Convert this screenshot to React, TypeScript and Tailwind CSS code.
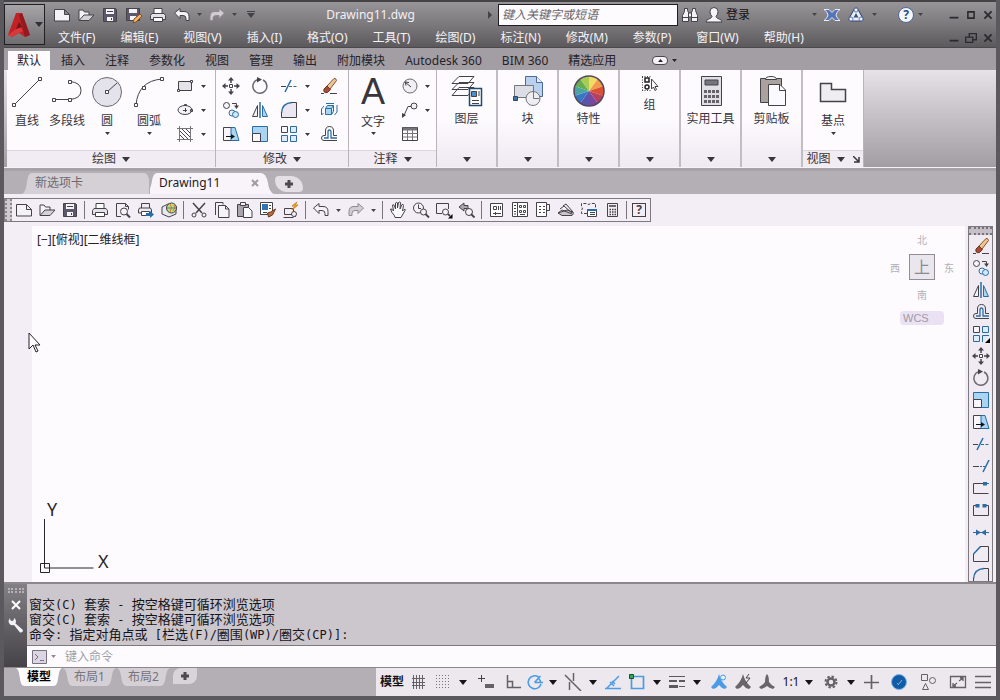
import type { ReactNode } from "react";

const INK = "#454248";
const BLUE = "#2c6ca6";
const SKY = "#a9d5f2";

const glyphs: Record<string, ReactNode> = {
  new: (
    <path d="M1.500 3.500h10l5 5v6.500h-15zM11.500 3.500v5h5" fill="#f4f2f6" />
  ),
  open: (
    <>
      <path d="M2 14V4h4l1.500 2H12v3" fill="#f4f2f6" />
      <path d="M2 14.500 7 9h10l-5 5.500z" fill="#d6d2da" />
    </>
  ),
  save: (
    <>
      <path d="M2.500 2.500h12l1 1v12h-13z" fill="#5b586a" />
      <path d="M5 3h8v5H5zM6 11h6v4H6z" fill="#f6f4f8" stroke="none" />
      <path d="M6 5.500h6M10.500 12v2" />
    </>
  ),
  saveAs: (
    <>
      <path d="M1.500 2.500h13v12h-13z" fill="#5b586a" />
      <path d="M4 3h8v4H4zM5 10h6v4H5z" fill="#f6f4f8" stroke="none" />
      <path d="m8 17 1-4 6-5 2 2-6 6z" fill="#f2b566" stroke="#8a4a22" />
    </>
  ),
  print: (
    <>
      <path d="M5 8V2.500h8V8" fill="#fff" />
      <path d="M3 7.500h12l1.500 2v4h-15v-4z" fill="#e4e1e8" />
      <path d="M4.500 11.500h9v4h-9z" fill="#fff" />
    </>
  ),
  undo: <path d="M1.500 7 7 2.500v3h4q5 0 5 5v4h-3v-2q0-3-3-3H7v3z" fill="#f4f2f6" />,
  redo: <path d="M16.500 7 11 2.500v3H7q-5 0-5 5v4h3v-2q0-3 3-3h3v3z" fill="#d0ccd2" stroke="#8d898f" />,
  binoculars: (
    <>
      <path d="M3.500 2.500h3v2l1 2v9h-6v-6l2-4zM11.500 2.500h3v2l2 5v6h-6v-9l1-2z" fill="#f4f2f6" />
      <path d="M7.500 7h3v4h-3zM1.500 11.500h6M10.500 11.500h6" fill="#f4f2f6" />
    </>
  ),
  user: (
    <path d="M9 1.500q4 0 4 4 0 3-2 5 0 1 2 2 4 1 4 3.500H1q0-2.500 4-3.500 2-1 2-2-2-2-2-5 0-4 4-4z" fill="#f6f4f8" />
  ),
  exchange: (
    <path d="M1 3.500h5l3 3 3-3h5q-4 3-4 5.500t4 5.500h-5l-3-3-3 3H1q4-3 4-5.500t-4-5.500z" fill="#5575b8" stroke="#e6ebf8" />
  ),
  a360: (
    <>
      <path d="M9 4 4 13h10z" stroke="#31456e" strokeWidth="5" strokeLinejoin="round" />
      <path d="M9 4 4 13h10z" stroke="#e8edf8" strokeWidth="3" strokeLinejoin="round" />
      <circle cx="9" cy="4" r="2" fill="#f1f4fb" stroke="#5b78ac" />
      <circle cx="4" cy="13" r="2" fill="#f1f4fb" stroke="#5b78ac" />
      <circle cx="14" cy="13" r="2" fill="#f1f4fb" stroke="#5b78ac" />
    </>
  ),
  preview: (
    <>
      <path d="M2.500 15.500v-13h9l3 3v3M11.500 2.500v3h3M2.500 15.500H7" />
      <circle cx="10" cy="10.500" r="3.500" fill="#f4f2f6" />
      <path d="m12.500 13 3.500 3.500" strokeWidth="2" />
    </>
  ),
  publish: (
    <>
      <path d="M4.500 7V2.500h8V7M2.500 7h11l1 2v3h-13V9z" fill="#eeebf1" />
      <path d="M4.500 10.500h8v4h-8z" fill="#fff" />
      <path d="M9 12h4v-2l4 3.500-4 3.500v-2H9z" fill={BLUE} stroke="none" />
    </>
  ),
  globe: (
    <>
      <path d="m2 6 6-3 8 2v8l-7 3-7-3z" fill="#e6e9ef" />
      <circle cx="11.500" cy="7" r="5" fill="#c8dc6c" />
      <path d="M10 3q3 3 0 8M14 4q2 3-1 6" stroke="#cf7a35" />
      <path d="M7 7h9" stroke="#3f81bd" />
    </>
  ),
  cut: (
    <>
      <path d="m3 2 9 10M15 2 6 12" strokeWidth="1.500" />
      <circle cx="4" cy="14" r="2" />
      <circle cx="14" cy="14" r="2" />
    </>
  ),
  copyDoc: (
    <>
      <path d="M2.500 14V1.500H10v2" />
      <path d="M5.500 4.500h7l3.500 3.500v8.500H5.500zM12.500 4.500V8H16" fill="#f6f4f8" />
    </>
  ),
  paste: (
    <>
      <path d="M1.500 3.500h11v12h-11z" fill="#a8a4ab" />
      <path d="M4.500 1.500h5v3h-5z" fill="#f3f1f5" />
      <path d="M7.500 6.500h5l3.500 3.500v6.500H7.500z" fill="#fbfafc" />
    </>
  ),
  matchProps: (
    <>
      <path d="M1.500 1.500h12v12h-12z" fill="#fff" />
      <path d="M3 3h6v6H3z" fill="#2f74b5" stroke="none" />
      <path d="M10 4.500h2M10 7.500h2M4 11.500h4" />
      <path d="m16.500 8-5 3-3 1 1 4 4-2z" fill="#b86b38" stroke="#6d3a20" />
    </>
  ),
  blockEdit: (
    <>
      <path d="M2.500 7.500h9v6h-9zM1.500 16.500h10M11 13l3 3" />
      <circle cx="12" cy="13" r="2.500" fill="#f4f2f6" />
      <path d="m15 1-5 4h3l-3 4 6-5h-3z" fill="#f6b23c" stroke="#d38420" />
    </>
  ),
  hand: (
    <path d="M6 16.500q0-2-3-5L1.500 8q1.500-.5 3 2L3.500 4q1.500-1 2 1l1 3V2q1.500-1.500 2 0v5l1-5.500q1.500-1 2 0L11 8l2-4.500q1.500-.5 1.500 1L13.500 10l1.500-1.500q2-.5 1 1l-4 7z" fill="#fbfafc" />
  ),
  zoomTime: (
    <>
      <circle cx="6.500" cy="7" r="5" fill="#f4f2f6" />
      <path d="M6.500 3.500v4H9" />
      <circle cx="11.500" cy="11" r="3" fill="#f4f2f6" />
      <path d="m13.500 13 3.500 3.500" strokeWidth="1.800" />
    </>
  ),
  zoomWindow: (
    <>
      <path d="M1.500 12.500v-10h12V8M1.500 12.500H7" />
      <circle cx="10.500" cy="11" r="3" fill="#f4f2f6" />
      <path d="m13 13 2 2" strokeWidth="1.800" />
      <path d="M17.500 13v4.500H13z" fill="#000" stroke="none" />
    </>
  ),
  zoomPrev: (
    <>
      <path d="m1 6 5-4v2.500h4v3H6V10z" fill="#aaa6ad" />
      <circle cx="11" cy="11" r="3.500" fill="#f4f2f6" />
      <path d="m13 13 3.500 3.500" strokeWidth="1.800" />
    </>
  ),
  palette: (
    <>
      <path d="M2.500 2.500h12v13h-12z" fill="#fff" />
      <path d="M5.500 5.500h3v3h-3zM10.500 5v4M12.500 5v4M5 12.500h8M7.500 11v3" />
    </>
  ),
  design: (
    <>
      <path d="M1.500 1.500h15v14h-15zM6.500 2v13" fill="#fff" />
      <path d="M3 4.500h2M3 7.500h2M3 10.500h2M3 13h2M8.500 4.500h2v2h-2zM12.500 4.500h2v2h-2zM8.500 9.500h2v2h-2zM12.500 9.500h2v2h-2zM9 13.500h5" />
    </>
  ),
  toolPalettes: (
    <>
      <path d="M2.500 1.500h10v14h-10z" fill="#fff" />
      <path d="M12.500 3.500h3v6h-3M5 5.500h2M9 5.500h2M5 8.500h2M9 8.500h2M5 11.500h2M9 11.500h2" />
    </>
  ),
  sheets: (
    <>
      <path d="m1 12 9-3 6 2q1 2-1 3.500H5z" fill="#c9c5cd" />
      <path d="m1 12 4-3 10 4M3 8l4-3 8 7M6 5l3-2 7 8" />
    </>
  ),
  markup: (
    <>
      <path d="M7 12.500H1.500V9q2-1 0-3V2.500h5q2 2 4 0h5V7" strokeDasharray="3 1.500" />
      <path d="M7.500 8.500h9v7h-9z" fill="#fff" />
      <path d="M7 9h10" strokeWidth="2" stroke={BLUE} />
      <path d="M10 11.500h5M10 13.500h5" />
    </>
  ),
  calc: (
    <>
      <path d="M4.500 2.500h10v13h-10z" fill="#f0edf3" />
      <path d="M6 4h7v2H6z" fill="#6a6870" stroke="none" />
      <path d="M6.500 8.500h7M6.500 11h7M6.500 13.500h7" strokeWidth="1.500" strokeDasharray="1.500 1" />
    </>
  ),
  move: (
    <>
      <path d="M9 1v5M9 12v5M1 9h5M12 9h5" strokeWidth="1.500" />
      <path d="m9 0 3 3.500H6zM9 18l3-3.500H6zM0 9l3.500-3v6zM18 9l-3.500-3v6z" fill={INK} stroke="none" />
      <path d="M7.500 7.500h3v3h-3z" fill="#fff" />
    </>
  ),
  rotate: (
    <>
      <path d="M7 2.500a7 7 0 1 0 5 .5" stroke="#6b686e" strokeWidth="1.500" />
      <path d="M6 0v5.500L11 2.500z" fill={INK} stroke="none" />
    </>
  ),
  trim: (
    <>
      <path d="M1 9.500h5" />
      <path d="M9 9.500h8" stroke={BLUE} strokeDasharray="3 1.500" />
      <path d="m5 15 6-12" stroke={BLUE} strokeWidth="1.500" />
    </>
  ),
  extend: (
    <>
      <path d="M1 9.500h6" />
      <path d="M8 9.500h5" stroke={BLUE} strokeDasharray="2 1" />
      <path d="m11 15 6-12" stroke={BLUE} strokeWidth="1.500" />
    </>
  ),
  erase: (
    <>
      <path d="M1 16.500h3M10 16.500h7" />
      <path d="m7 9 7-7.500q2-.5 2.500 2L10 12z" fill="#ecc88c" stroke="#8b4a32" />
      <path d="m4 12 3-3 3.500 3.500-3 3q-4.500 1-3.500-3.500z" fill="#a64c35" stroke="#6e3426" />
    </>
  ),
  copy: (
    <>
      <circle cx="4.500" cy="4.500" r="3" fill="#f6f4f8" />
      <circle cx="10" cy="12" r="3" fill="#e4f2fc" stroke={BLUE} />
      <circle cx="13.500" cy="13.500" r="3" fill="#cfe8fa" stroke={BLUE} />
      <path d="M10 2.500h4.500V5" />
      <path d="M12 4.500h5L14.500 8z" fill={INK} stroke="none" />
    </>
  ),
  mirror: (
    <>
      <path d="M1.500 15.500h5v-11z" fill="#f4f2f6" />
      <path d="M9 1v16" strokeWidth="1.500" stroke={BLUE} />
      <path d="M16.500 15.500h-5v-11z" fill={SKY} stroke={BLUE} />
    </>
  ),
  fillet: (
    <>
      <path d="M1.500 16.500h15v-15H11Q2 2 1.500 11z" fill="#ebe7f0" stroke="none" />
      <path d="M1.500 12Q2 2 12 1.500" stroke={BLUE} strokeWidth="1.300" />
      <path d="M1.500 11v5.500h15v-15H12" />
    </>
  ),
  chamfer: (
    <>
      <path d="M8 1.500h8.500v15h-15V9" fill="#efecf3" />
      <path d="m1.500 9 7-7.500" stroke={BLUE} strokeWidth="1.500" />
    </>
  ),
  explode: (
    <>
      <path d="M5.500 7.500h6v6h-6zM5.500 7.500l2-3h6l-2 3M13.500 4.500v6l-2 3" fill={SKY} stroke={BLUE} />
      <path d="m4 5-2.500 3v6l2-2M17 4v7l-2.500 3M6 2.500h8" stroke={BLUE} />
    </>
  ),
  stretch: (
    <>
      <path d="M10 2.500H1.500v13H10" fill="#f8f6fa" />
      <path d="M9 2.500h4l4 13H9z" fill={SKY} stroke={BLUE} />
      <path d="M4 11.500h6" stroke="#111" />
      <path d="m9 9 4 2.500L9 14z" fill="#111" stroke="none" />
    </>
  ),
  scale: (
    <>
      <path d="M1.500 1.500h15v15h-15z" fill={SKY} stroke={BLUE} />
      <path d="M1.500 8.500h8v8h-8z" fill="#f8f6fa" />
    </>
  ),
  array: (
    <>
      <path d="M1.500 1.500h6v6h-6z" fill="#f8f6fa" />
      <path d="M10.500 1.500h6v6h-6zM1.500 10.500h6v6h-6zM10.500 10.500h6v6h-6z" fill="#dcedf9" stroke={BLUE} />
    </>
  ),
  arrayCorner: (
    <>
      <path d="M1.500 1.500h6v6h-6z" fill="#f8f6fa" />
      <path d="M10.500 1.500h6v6h-6zM1.500 10.500h6v6h-6zM10.500 17v-6.500H17" fill="#dcedf9" stroke={BLUE} />
      <path d="M18 13v5h-5z" fill="#000" stroke="none" />
    </>
  ),
  offset: (
    <>
      <path d="M17 15.500H4q-2.500 0-2.500-2.500T4 10.500h1.500V6q0-4.500 4-4.500t4 4.500v4.500H17" stroke={INK} />
      <path d="M17 13H11V7q0-2-1.500-2T8 7v6H4" stroke={BLUE} strokeWidth="1.300" />
    </>
  ),
  breakPoint: (
    <>
      <path d="M11 4.500H1.500v10h15" />
      <path d="M12 4.500h5" stroke={BLUE} />
      <path d="M11 3h4v3.500h-4z" fill={BLUE} stroke="none" />
    </>
  ),
  break: (
    <>
      <path d="M4 4.500H1.500v10h15v-10H14" />
      <path d="M3.500 3h4v3.500h-4zM10.500 3h4v3.500h-4z" fill={BLUE} stroke="none" />
    </>
  ),
  join: (
    <>
      <path d="M1 9.500h16" stroke={BLUE} />
      <path d="m4 6.500 5 3-5 3zM14 6.500l-5 3 5 3z" fill={BLUE} stroke="none" />
    </>
  ),
  rect: (
    <>
      <path d="M2.500 4.500h13v9h-13z" fill="#e6e2ea" />
      <path d="M1.500 12.500h2v2h-2zM14.500 3.500h2v2h-2z" fill="#fff" />
    </>
  ),
  ellipse: (
    <>
      <ellipse cx="9" cy="9" rx="7" ry="4.500" fill="#f4f2f6" />
      <path d="M7 9.500h4M9.500 7v4M14.500 8.500h2v2h-2zM8.500 3.500h2v1h-2z" />
    </>
  ),
  hatch: (
    <>
      <path d="M3.500 1v16M14.500 1v16M1 3.500h16M1 14.500h16" stroke="#77737a" />
      <path d="m4 6 8 8M4 10l4 4M6 4l8 8M10 4l4 4" />
    </>
  ),
  diameter: (
    <>
      <circle cx="9" cy="9" r="7" fill="#f1eff4" stroke="#6b686e" />
      <path d="m4 5 6 5M4 5l4 .5M4 5l1 3.500" />
    </>
  ),
  leader: (
    <>
      <circle cx="13" cy="5" r="3" fill="#f1eff4" />
      <path d="M10 5.500H7l-4.500 10" />
      <path d="M1 12v5l4-3z" fill={INK} stroke="none" />
    </>
  ),
  table: (
    <>
      <path d="M1.500 2.500h15v13h-15z" fill="#fff" />
      <path d="M2 4h14" strokeWidth="3" stroke="#77737b" />
      <path d="M1.500 8.500h15M1.500 12h15M6.500 5v10M11.500 5v10" stroke="#77737b" />
    </>
  ),
  group: (
    <>
      <path d="M1 1.500h10M1 15.500h10M1.500 2v14" strokeDasharray="1 1.500" />
      <path d="M4 3h4v4H4z" strokeWidth="1.500" stroke="#222" />
      <circle cx="6" cy="12" r="2" strokeWidth="1.500" stroke="#222" />
      <path d="M10.500 4v10l2-2 1.500 3.500 1.500-1-1.500-3h3z" fill="#fff" />
    </>
  ),
  snapGrid: <path d="M3.500 2v14M6.500 2v14M9.500 2v14M12.500 2v14M2 5.500h13M2 9.500h13M2 12.500h13" stroke="#646167" />,
  dots: <path d="M2 2.500h15M2 5.500h15M2 8.500h15M2 11.500h15M2 14.500h15" stroke="#77747a" strokeDasharray="1 2" />,
  dynInput: (
    <>
      <path d="M4.500 2v7M1 5.500h7" />
      <path d="M8 11h9v4H8z" fill="#646167" stroke="none" />
    </>
  ),
  ortho: <path d="M3.500 2v12.500H17M3.500 8.500h5v6" stroke="#646167" strokeWidth="1.500" />,
  polar: <path d="M12.500 4A6.500 6.500 0 1 0 15 11M8.500 9.500H17M8.500 9.500l6-6.500M12 5q2.500 2 2.500 4" stroke="#4b9be6" strokeWidth="1.600" />,
  isoplane: <path d="m1 2 16 16M9.500 0v8M5.500 17V9" stroke="#646167" strokeWidth="1.500" />,
  track: <path d="M1 15.500h16M3 15 15 3M6 9l4 4M8 8l3 3" stroke="#4b9be6" strokeWidth="1.500" />,
  osnap: (
    <>
      <path d="M3.500 3.500h12v12h-12z" stroke="#4b9be6" strokeWidth="1.700" />
      <path d="M1.500 1.500h4v4h-4z" fill="#32a852" stroke="#174f28" />
    </>
  ),
  weights: (
    <g stroke="#5b585e">
      <path d="M1 3.500h16" />
      <path d="M1 8h8M11 8h6" strokeWidth="2" />
      <path d="M1 13.500h9" strokeWidth="3" />
      <path d="M11 13.500h6" />
    </g>
  ),
  annoVis: (
    <>
      <path d="M9 1q2 8 8 13l-2 2q-4-1-6-4-2 3-6 4l-2-2q6-5 8-13z" fill="#4b9be6" stroke="none" />
      <circle cx="13" cy="4.500" r="2.500" fill="#e7effa" stroke="#4b9be6" />
    </>
  ),
  annoAuto: (
    <>
      <path d="M9 1q2 8 8 13l-2 2q-4-1-6-4-2 3-6 4l-2-2q6-5 8-13z" fill="#68656b" stroke="none" />
      <path d="m15 1-3 4h4l-4 5" />
    </>
  ),
  annoScale: <path d="M9 1q2 2 2 8 2 3 6 5l-2 2q-4-1-6-3-2 2-6 3l-2-2q4-2 6-5 0-6 2-8z" fill="#68656b" stroke="none" />,
  gear: (
    <g stroke="#646167">
      <circle cx="9" cy="9" r="3.500" strokeWidth="2.500" />
      <circle cx="9" cy="9" r="5.500" strokeWidth="2" strokeDasharray="2.400 1.900" />
    </g>
  ),
  plus: <path d="M9.500 2v14M2 9.500h15" stroke="#646167" strokeWidth="1.700" />,
  hardware: (
    <>
      <circle cx="9" cy="9" r="7.500" fill="#135ca5" stroke="#7db5e8" />
      <path d="m8 12 4-5M7 10l2 2" stroke="#74b7ec" />
    </>
  ),
  isolate: (
    <>
      <path d="M2.500 1.500h6v6h-6zM6.500 10.500l3 6h-6z" stroke="#646167" />
      <circle cx="13.500" cy="7.500" r="3" stroke="#646167" />
    </>
  ),
  fullscreen: <path d="M1.500 3.500h15v11h-15zM10 8l4-3M11 5h3v3M8 10l-4 3M4 10v3h3" stroke="#646167" strokeWidth="1.300" />,
  burger: <path d="M1 3.500h16M1 9.500h16M1 14.500h16" stroke="#646167" strokeWidth="1.500" />,
  minimize: <path d="M4 12h10" strokeWidth="2" stroke="#2c2a2e" />,
  maximize: <path d="M5 5h8v8H5z" strokeWidth="2" stroke="#2c2a2e" />,
  restore: <path d="M3 8h8v6H3zM7 8V4h8v7h-4" strokeWidth="1.500" stroke="#2c2a2e" />,
  close: <path d="m5 5 8 8M13 5l-8 8" strokeWidth="2" stroke="#2c2a2e" />,
  wrench: <path d="M3 2q0 3 2 3t2-3q3 2 1.500 5.500L16 14q0 3-3 2.500L7 9Q2 10 1.500 5z" fill="#f4f2f6" stroke="none" />,
};

const bigGlyphs: Record<string, ReactNode> = {
  line: (
    <>
      <path d="M4 28 28 4" />
      <path d="M1.500 27.500h3v3h-3zM27.500 1.500h3v3h-3z" fill="#fff" />
    </>
  ),
  polyline: (
    <>
      <path d="M3 23.500h16q11-1 11-9t-11-9" />
      <path d="M1.500 22.500h3v3h-3zM17.500 22.500h3v3h-3zM17.500 4.500h3v3h-3z" fill="#fff" />
    </>
  ),
  circle: (
    <>
      <circle cx="16" cy="16" r="14.500" fill="#e4e3ec" stroke="#6b686e" />
      <path d="m16 16 10-9" />
      <path d="M14.500 14.500h3v3h-3z" fill="#fff" />
    </>
  ),
  arc: (
    <>
      <path d="M3 29Q5 5 29 3" />
      <path d="M1.500 27.500h3v3h-3zM9.500 10.500h3v3h-3zM27.500 1.500h3v3h-3z" fill="#fff" />
    </>
  ),
  layers: (
    <>
      <path d="M1 20.500h16l6-8H8zM1 14.500h16l6-7H8zM1 8.500h16l6-7H8z" fill="#fdfcfe" />
      <path d="M18.500 13.500h12v17h-12z" fill="#fff" stroke="#254a70" strokeWidth="1.500" />
      <path d="M20.500 16.500h5v5h-5z" fill="#4b90cc" />
      <path d="M28 16v5M21 25.500h7M21 28.500h7" />
    </>
  ),
  block: (
    <>
      <path d="M13.500 1.500h11l6 6v14h-17z" fill="#b9d0ee" stroke="#4a6898" />
      <path d="M24.500 1.500v6h6" fill="#e5eefa" stroke="#4a6898" />
      <path d="M2.500 10.500h19v12h-19z" fill="#dddde6" stroke="#77747c" />
      <circle cx="21" cy="23.500" r="7" fill="#ededf2" stroke="#77747c" />
      <path d="M21.500 23.500v-7M21.500 23.500h6" stroke="#77747c" />
      <path d="M1.500 21.500h4v4h-4z" fill="#3977b3" />
    </>
  ),
  utils: (
    <>
      <path d="M6.500 1.500h20v29h-20z" fill="#e1dfe6" />
      <path d="M10 5h13v5H10z" fill="#77747e" />
      <path d="M9 16.500h15M9 21.500h15M9 26.500h15" strokeWidth="3" strokeDasharray="3 1" stroke="#65626a" />
    </>
  ),
  clipboard: (
    <>
      <path d="M4.500 3.500h21v24h-21z" fill="#aaa29f" />
      <path d="M9.500 4.500q0-3 5.500-3t5.500 3z" fill="#f5f4f6" />
      <path d="M12.500 9.500H24l5.500 5.500v15.500h-17z" fill="#fbfafc" />
      <path d="M23.500 9.500v6h6" />
    </>
  ),
  base: <path d="M3.500 7.500h11v6h14v12h-25z" fill="#efecf2" strokeWidth="1.500" />,
};

const Icon = ({ name, size = 18 }: { name: string; size?: number }) => (
  <svg width={size} height={size} viewBox="0 0 18 18" fill="none" stroke={INK} className="shrink-0" aria-hidden="true">
    {glyphs[name]}
  </svg>
);

const BigIcon = ({ name }: { name: string }) => (
  <svg width={32} height={32} viewBox="0 0 32 32" fill="none" stroke={INK} className="shrink-0" aria-hidden="true">
    {bigGlyphs[name]}
  </svg>
);

const Caret = ({ wide, className = "" }: { wide?: boolean; className?: string }) => (
  <svg
    width={wide ? 8 : 5}
    height={wide ? 5 : 3}
    viewBox="0 0 8 5"
    className={`shrink-0 fill-current ${className}`}
    aria-hidden="true"
  >
    <path d="M0 0h8L4 5z" />
  </svg>
);

interface ToolProps {
  name: string;
  className?: string;
  size?: number;
}

const Tool = ({ name, className = "w-6", size = 18 }: ToolProps) => (
  <button aria-label={name} className={`flex h-full shrink-0 items-center justify-center ${className}`}>
    <Icon name={name} size={size} />
  </button>
);

const Drop = ({ className = "w-3", wide }: { className?: string; wide?: boolean }) => (
  <button aria-label="more" className={`flex h-full shrink-0 items-center justify-center ${className}`}>
    <Caret wide={wide} />
  </button>
);

const ColorWheel = () => {
  const colors = ["#f3dc63", "#f09c48", "#dd4f35", "#b8405f", "#7a479e", "#5a54ad", "#3876c4", "#4ba3a4", "#65ad50", "#a7cc54"];
  const point = (i: number) => {
    const a = (i / colors.length) * Math.PI * 2 - Math.PI / 2;
    return `${16 + 15 * Math.cos(a)} ${16 + 15 * Math.sin(a)}`;
  };
  return (
    <svg width={32} height={32} viewBox="0 0 32 32" className="shrink-0" aria-hidden="true">
      {colors.map((c, i) => (
        <path key={c} d={`M16 16L${point(i)}A15 15 0 0 1 ${point(i + 1)}z`} fill={c} />
      ))}
      <circle cx="16" cy="16" r="15" fill="none" stroke="#55465c" strokeWidth="1.500" />
    </svg>
  );
};

const menus = [
  "文件(F)", "编辑(E)", "视图(V)", "插入(I)", "格式(O)", "工具(T)",
  "绘图(D)", "标注(N)", "修改(M)", "参数(P)", "窗口(W)", "帮助(H)",
];

const TitleBar = () => (
  <header className="flex h-12 shrink-0 border-t-2 border-b border-t-[#464347] border-b-[#4c494d] bg-linear-to-b from-[#989599] via-[#7c797d] to-[#5c595d]">
    <button
      aria-label="Application menu"
      className="mt-0.5 flex h-[41px] w-[41px] shrink-0 items-center justify-center border border-[#211f22] bg-linear-to-b from-[#a8a5a9] to-[#716e72] text-[#333035]"
    >
      <svg width="24" height="26" viewBox="0 0 24 26" aria-hidden="true">
        <path d="M9 1h6l8 22-5 2-6-4-7 4-4-2z" fill="#c22125" />
        <path d="m12 3 6 22 5-2L15 1z" fill="#931a1f" />
        <path d="m1 23 12-9 3 5-4 2-7 4z" fill="#d9383a" />
        <path d="m12 10 3 5-6 2z" fill="#6e1519" />
      </svg>
      <Caret wide className="ml-1" />
    </button>
    <div className="flex min-w-0 flex-1 flex-col pl-[5px]">
      <div className="flex h-[25px] items-center text-[#454247]">
        <Tool name="new" />
        <Tool name="open" />
        <Tool name="save" />
        <Tool name="saveAs" />
        <Tool name="print" />
        <Tool name="undo" />
        <Drop className="w-[10px]" />
        <Tool name="redo" className="w-[25px]" />
        <Drop className="w-[10px]" />
        <button aria-label="Customize" className="ml-1 flex w-4 flex-col items-center gap-px">
          <span className="h-px w-2 bg-current" />
          <Caret wide />
        </button>
        <h1 className="flex-1 pr-1.5 text-center text-xs text-[#f2f0f3]">Drawing11.dwg</h1>
        <svg width="4" height="8" viewBox="0 0 4 8" className="mr-1.5 fill-current" aria-hidden="true">
          <path d="M0 0v8l4-4z" />
        </svg>
        <input
          type="text"
          aria-label="搜索"
          placeholder="键入关键字或短语"
          className="h-[22px] w-45 border border-[#1f1d20] bg-[#fdfbfe] px-[3px] text-xs italic outline-none placeholder:text-[#656268]"
        />
        <Tool name="binoculars" />
        <Tool name="user" />
        <button className="w-[82px] text-left text-xs text-[#121013]">登录</button>
        <Drop />
        <Tool name="exchange" />
        <Tool name="a360" />
        <Drop />
        <button
          aria-label="Help"
          className="mr-1 ml-[18px] flex size-4 items-center justify-center rounded-full border border-[#4b6796] bg-[#f4f6fb] text-xs font-bold text-[#274d8c]"
        >
          ?
        </button>
        <Drop className="mr-[23px]" />
        <Tool name="minimize" className="w-4" size={16} />
        <Tool name="maximize" className="w-[18px]" size={14} />
        <Tool name="close" className="w-4" size={16} />
      </div>
      <div className="mt-0.5 flex h-[18px] items-center justify-between">
        <nav className="flex gap-[25px] pl-2 text-xs whitespace-nowrap text-[#f4f2f5]">
          {menus.map((m) => (
            <button key={m}>{m}</button>
          ))}
        </nav>
        <div className="flex h-full">
          <Tool name="minimize" className="w-4" size={16} />
          <Tool name="restore" className="w-[18px]" size={16} />
          <Tool name="close" className="w-4" size={16} />
        </div>
      </div>
    </div>
  </header>
);

const ribbonTabs = ["插入", "注释", "参数化", "视图", "管理", "输出", "附加模块", "Autodesk 360", "BIM 360", "精选应用"];

const RibbonTabs = () => (
  <nav className="flex h-[22px] shrink-0 items-end bg-[#a39ea4] pl-1 text-xs whitespace-nowrap text-[#252328]">
    <button className="h-[19px] border-t border-white bg-[#fdfbfe] px-[9px]">默认</button>
    <div className="flex h-[19px] gap-5 pl-[11px]">
      {ribbonTabs.map((t) => (
        <button key={t}>{t}</button>
      ))}
    </div>
    <button aria-label="Minimize ribbon" className="ml-9 flex h-[19px] items-center gap-1">
      <span className="flex h-[9px] w-4 items-center justify-center rounded-sm border border-[#4a474c] bg-[#f4f2f5]">
        <Caret className="rotate-180" />
      </span>
      <Caret />
    </button>
  </nav>
);

interface PanelProps {
  title: string;
  width: string;
  children: ReactNode;
  launcher?: boolean;
}

const Panel = ({ title, width, children, launcher }: PanelProps) => (
  <section className={`flex shrink-0 flex-col border-r border-[#b9b3ba] bg-[#fdfbfe] ${width}`}>
    <div className="flex h-20">{children}</div>
    <button className="flex flex-1 items-center justify-center gap-1.5 border-t border-[#dbd5dd] bg-[#f1ecf3]">
      {title}
      <Caret wide />
      {launcher && (
        <svg width="7" height="7" viewBox="0 0 7 7" stroke="currentColor" fill="none" className="ml-0.5" aria-hidden="true">
          <path d="m0 0 6 6M6 1v5H1" strokeWidth="1.500" />
        </svg>
      )}
    </button>
  </section>
);

const BigTool = ({ label, width, drop, children }: { label: string; width: string; drop?: boolean; children: ReactNode }) => (
  <button className={`flex shrink-0 flex-col items-center pt-1.5 ${width}`}>
    {children}
    <span className="mt-[5px] leading-4">{label}</span>
    {drop && <Caret className="mt-[3px]" />}
  </button>
);

const ToolColumn = ({ names, width }: { names: string[]; width: string }) => (
  <div className={`flex flex-col pt-1 ${width}`}>
    {names.map((n) => (
      <div key={n} className="h-6">
        <Tool name={n} className="w-full" />
      </div>
    ))}
  </div>
);

const DropColumn = ({ slots, width }: { slots: boolean[]; width: string }) => (
  <div className={`flex flex-col pt-1 ${width}`}>
    {slots.map((on, i) => (
      <div key={i} className="h-6">{on && <Drop className="w-full" />}</div>
    ))}
  </div>
);

const FoldedPanel = ({ label, children }: { label: string; children: ReactNode }) => (
  <button className="flex w-[61px] shrink-0 flex-col items-center border-r-2 border-[#c2bcc3] bg-linear-to-b from-[#fdfbfe] from-50% to-[#efe9f2] pt-[5px] whitespace-nowrap">
    {children}
    <span className="mt-1 leading-4">{label}</span>
    <Caret wide className="mt-auto mb-[5px]" />
  </button>
);

const Ribbon = () => (
  <div className="flex h-[98px] shrink-0 border-b border-[#f6f3f7] bg-linear-to-b from-[#e7e2e8] to-[#a29da3] pl-[3px] text-xs text-[#39363b]">
    <Panel title="绘图" width="w-[209px]">
      <BigTool label="直线" width="w-10"><BigIcon name="line" /></BigTool>
      <BigTool label="多段线" width="w-10"><BigIcon name="polyline" /></BigTool>
      <BigTool label="圆" width="w-10" drop><BigIcon name="circle" /></BigTool>
      <BigTool label="圆弧" width="w-11" drop><BigIcon name="arc" /></BigTool>
      <ToolColumn names={["rect", "ellipse", "hatch"]} width="w-7" />
      <DropColumn slots={[true, true, true]} width="w-2" />
    </Panel>
    <Panel title="修改" width="w-[133px]">
      <ToolColumn names={["move", "copy", "stretch"]} width="w-[29px]" />
      <ToolColumn names={["rotate", "mirror", "scale"]} width="w-[29px]" />
      <ToolColumn names={["trim", "fillet", "array"]} width="w-[29px]" />
      <DropColumn slots={[true, true, true]} width="w-2" />
      <ToolColumn names={["erase", "explode", "offset"]} width="w-9" />
    </Panel>
    <Panel title="注释" width="w-[88px]">
      <button className="flex w-12 flex-col items-center pt-1.5">
        <span className="h-8 font-['Liberation_Sans',Arial,sans-serif] text-[36px] leading-8 text-[#39363b]">A</span>
        <span className="mt-[6px] leading-4">文字</span>
        <Caret className="mt-0.5" />
      </button>
      <ToolColumn names={["diameter", "leader", "table"]} width="w-[26px]" />
      <DropColumn slots={[true, true, false]} width="w-2" />
    </Panel>
    <FoldedPanel label="图层"><BigIcon name="layers" /></FoldedPanel>
    <FoldedPanel label="块"><BigIcon name="block" /></FoldedPanel>
    <FoldedPanel label="特性"><ColorWheel /></FoldedPanel>
    <FoldedPanel label="组"><Icon name="group" /></FoldedPanel>
    <FoldedPanel label="实用工具"><BigIcon name="utils" /></FoldedPanel>
    <FoldedPanel label="剪贴板"><BigIcon name="clipboard" /></FoldedPanel>
    <Panel title="视图" width="w-[61px]" launcher>
      <BigTool label="基点" width="w-[60px]" drop><BigIcon name="base" /></BigTool>
    </Panel>
  </div>
);

const FileTabs = () => (
  <div className="flex h-[26px] shrink-0 items-end border-t-[3px] border-[#a7a2a8] bg-[#b4afb5] pl-[18px] text-xs">
    <button className="relative h-[22px] w-[128px] pl-[13px] text-left text-[#6e6a70]">
      <svg className="absolute inset-0 size-full" viewBox="0 0 128 22" preserveAspectRatio="none" aria-hidden="true">
        <path d="M0 22Q4 20 5 10 6 1 10 1h112q4 0 5 7v14z" fill="#d5d0d6" />
      </svg>
      <span className="relative">新选项卡</span>
    </button>
    <button className="relative flex h-[22px] w-[124px] items-center justify-between pr-[15px] pl-[9px] text-[#1c1a1e]">
      <svg className="absolute inset-0 size-full" viewBox="0 0 124 22" preserveAspectRatio="none" aria-hidden="true">
        <path d="M-4 22Q0 20 2 9 3 1 7 1h104q5 0 7 10 1 9 6 11z" fill="#f8f4fa" />
      </svg>
      <span className="relative">Drawing11</span>
      <span className="relative text-[#a09ca2]">
        <svg width="8" height="8" viewBox="0 0 8 8" stroke="currentColor" strokeWidth="2" aria-hidden="true">
          <path d="m1 1 6 6M7 1 1 7" />
        </svg>
      </span>
    </button>
    <button aria-label="New tab" className="mb-0.5 ml-px flex h-4 w-7 items-center justify-center rounded-tl-sm rounded-tr-xl rounded-br-sm rounded-bl-xl bg-[#e3dfe5] text-[#4d4a4f]">
      <svg width="8" height="8" viewBox="0 0 8 8" stroke="currentColor" strokeWidth="3" aria-hidden="true">
        <path d="M4 0v8M0 4h8" />
      </svg>
    </button>
  </div>
);

const toolbarGroups = [
  ["new", "open", "save"],
  ["print", "preview", "publish", "globe"],
  ["cut", "copyDoc", "paste", "matchProps", "blockEdit"],
  ["undo", "redo"],
  ["hand", "zoomTime", "zoomWindow", "zoomPrev"],
  ["palette", "design", "toolPalettes", "sheets", "markup", "calc"],
];

const Toolbar = () => (
  <div className="shrink-0 bg-[#f3eef5] pt-1 pb-1">
    <div className="flex h-6 w-fit items-center border border-[#7d797f] text-[#444146]">
      <span className="h-full w-[7px] border-x-2 border-dotted border-[#8e8a90] bg-[#cfcad0]" />
      {toolbarGroups.map((group) => (
        <div key={group[0]} className="flex h-full items-center">
          {group.map((n) => (
            <div key={n} className="flex h-full">
              <Tool name={n} className="w-[23px]" />
              {group.length === 2 && <Drop />}
            </div>
          ))}
          <span className="mx-[3px] h-[18px] w-px bg-[#77737a]" />
        </div>
      ))}
      <button aria-label="Help" className="mr-1 ml-0.5 flex size-[14px] items-center justify-center border border-[#444146] text-xs font-bold">
        ?
      </button>
    </div>
  </div>
);

const modifyTools = [
  "erase", "copy", "mirror", "offset", "arrayCorner", "move", "rotate", "scale",
  "stretch", "trim", "extend", "breakPoint", "break", "join", "chamfer", "fillet",
];

const Workspace = () => (
  <main className="relative flex min-h-0 flex-1 bg-[#f3eef5]">
    <div className="relative ml-7 flex-1 bg-[#fdfbfe]">
      <p className="pt-1.5 pl-[5px] text-xs leading-4 text-[#242127]">[−][俯视][二维线框]</p>
      <div className="absolute top-[7px] right-[7px] grid grid-cols-[18px_36px_18px] place-items-center text-[10px] leading-[14px] text-[#b3aeb5]">
        <span className="col-start-2">北</span>
        <span className="col-start-1">西</span>
        <button className="mt-[7px] mb-2 flex size-[26px] items-center justify-center border border-[#938e96] bg-[#eae6ee] text-base text-[#8e8a93]">
          上
        </button>
        <span>东</span>
        <span className="col-start-2">南</span>
        <button className="col-span-3 mt-[9px] h-[14px] w-11 rounded-sm bg-[#eae2f2] pl-[3px] text-left font-['Liberation_Sans',Arial,sans-serif] text-[11px] text-[#9f99a4]">
          WCS
        </button>
      </div>
      <svg width="80" height="90" viewBox="0 0 80 90" className="absolute bottom-px left-1" aria-hidden="true">
        <path d="M8.500 28v49h49M4.500 72.500h9v9h-9z" fill="none" stroke="#29262b" />
        <text x="11" y="25" fill="#29262b" className="text-lg">Y</text>
        <text x="62" y="77" fill="#29262b" className="text-lg">X</text>
      </svg>
    </div>
    <aside className="mr-[3px] ml-[3px] flex w-[25px] flex-col items-center overflow-hidden border border-[#7d797f] bg-[#f0ebf2]">
      <span className="h-2 w-full shrink-0 border-y-2 border-dotted border-[#77737a] bg-[#c5c0c7]" />
      {modifyTools.map((n) => (
        <div key={n} className="h-[22px] shrink-0">
          <Tool name={n} className="w-[23px]" />
        </div>
      ))}
    </aside>
    <svg width="14" height="21" viewBox="0 0 14 21" className="absolute top-[106px] left-6" aria-hidden="true">
      <path d="M1 1v16l4-4 3 7 2-1-3-6h5z" fill="#fff" stroke="#242127" />
    </svg>
  </main>
);

const history = [
  "窗交(C) 套索 - 按空格键可循环浏览选项",
  "窗交(C) 套索 - 按空格键可循环浏览选项",
  "命令: 指定对角点或 [栏选(F)/圈围(WP)/圈交(CP)]:",
];

const CommandLine = () => (
  <section className="flex shrink-0 border-t-2 border-b border-[#8b878d] bg-[#ccc6cd]">
    <div className="flex w-[23px] flex-col items-center bg-linear-to-b from-[#828084] to-[#464348] pt-1">
      <span className="h-[5px] w-4 border-y-2 border-dotted border-[#b4b0b6]" />
      <button aria-label="Close" className="mt-[7px] text-white">
        <svg width="10" height="10" viewBox="0 0 10 10" stroke="currentColor" strokeWidth="2" aria-hidden="true">
          <path d="m1 1 8 8M9 1 1 9" />
        </svg>
      </button>
      <button aria-label="Settings" className="mt-1.5"><Icon name="wrench" /></button>
    </div>
    <div className="flex-1">
      <div className="pt-[13px] pb-[3px] pl-0.5 font-['DejaVu_Sans_Mono','Noto_Sans_CJK_SC',monospace] text-[13px] leading-[15px] text-[#161418]">
        {history.map((line, i) => (
          <p key={i} className="h-[15px] whitespace-pre">
            {line.split(/([ -~]+)/).map((part, j) => (
              <span key={j} className={j % 2 ? "text-xs leading-[15px]" : ""}>{part}</span>
            ))}
          </p>
        ))}
      </div>
      <div className="flex h-[22px] items-center border-t border-[#7d797f] bg-[#fdfbfe] pl-[5px] text-[#8d898f]">
        <button aria-label="Recent commands" className="flex items-center gap-1">
          <svg width="15" height="14" viewBox="0 0 15 14" fill="#dcd6e4" stroke="#77727f" aria-hidden="true">
            <path d="M.5.5h14v13H.5z" />
            <path d="m3 4 3 3-3 3M8 10.500h4" fill="none" />
          </svg>
          <Caret />
        </button>
        <input
          type="text"
          aria-label="命令"
          placeholder="键入命令"
          className="ml-[9px] flex-1 text-xs outline-none placeholder:text-[#a39fa5]"
        />
      </div>
    </div>
  </section>
);

const LayoutTab = ({ label, active }: { label: string; active?: boolean }) => (
  <button className={`relative h-[18px] shrink-0 px-[11px] ${active ? "z-10 font-bold text-black" : "text-[#77737a]"}`}>
    <svg className="absolute inset-0 size-full" viewBox="0 0 50 18" preserveAspectRatio="none" aria-hidden="true">
      <path d="M0 0h50q-3 1-4 9-1 9-5 9H9q-4 0-5-9-1-8-4-9z" fill={active ? "#fdfbfe" : "#d5d0d6"} />
    </svg>
    <span className="relative">{label}</span>
  </button>
);

const StatusBar = () => (
  <footer className="flex h-7 shrink-0 bg-[#b4afb5] text-xs whitespace-nowrap">
    <div className="flex flex-1 items-start gap-px pl-3">
      <LayoutTab label="模型" active />
      <LayoutTab label="布局1" />
      <LayoutTab label="布局2" />
      <button aria-label="New layout" className="ml-0.5 flex h-4 w-6 items-center justify-center rounded-tl-lg rounded-br-lg bg-[#d9d4da] text-[#4d4a4f]">
        <svg width="8" height="8" viewBox="0 0 8 8" stroke="currentColor" strokeWidth="3" aria-hidden="true">
          <path d="M4 0v8M0 4h8" />
        </svg>
      </button>
    </div>
    <div className="flex shrink-0 items-center bg-[#ede8ee] pr-[3px] pl-1 text-[#161418]">
      <button className="mr-[3px] font-bold">模型</button>
      <Tool name="snapGrid" />
      <Tool name="dots" />
      <Drop wide className="w-4" />
      <Tool name="dynInput" className="w-[30px]" />
      <Tool name="ortho" />
      <Tool name="polar" className="w-5" />
      <Drop wide className="w-4" />
      <Tool name="isoplane" />
      <Drop wide className="w-4" />
      <Tool name="track" />
      <Tool name="osnap" />
      <Drop wide className="w-4" />
      <Tool name="weights" />
      <Drop wide className="w-4" />
      <Tool name="annoVis" className="w-7" />
      <Tool name="annoAuto" className="w-5" />
      <Tool name="annoScale" className="w-7" />
      <button className="w-5 text-center">1:1</button>
      <Drop wide className="w-4" />
      <Tool name="gear" className="w-7" />
      <Drop wide />
      <Tool name="plus" className="w-7" />
      <Tool name="hardware" className="w-7" />
      <Tool name="isolate" className="w-[30px]" />
      <Tool name="fullscreen" className="w-[30px]" />
      <Tool name="burger" className="w-5" />
    </div>
  </footer>
);

export default function App() {
  return (
    <div className="flex h-screen flex-col overflow-hidden border-x-4 border-b-4 border-[#5c595e] bg-[#b4afb5] font-['Noto_Sans','Noto_Sans_CJK_SC',sans-serif]">
      <TitleBar />
      <RibbonTabs />
      <Ribbon />
      <FileTabs />
      <Toolbar />
      <Workspace />
      <CommandLine />
      <StatusBar />
    </div>
  );
}
